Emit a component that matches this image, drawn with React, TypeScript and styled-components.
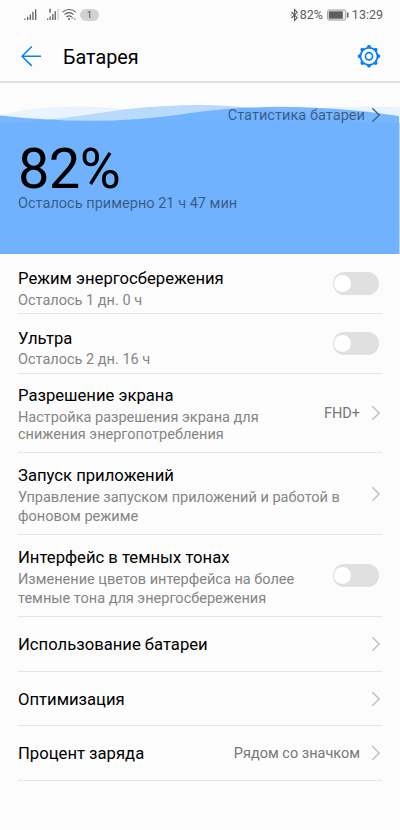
import React from 'react';
import styled, { createGlobalStyle } from 'styled-components';

const GlobalStyle = createGlobalStyle`
  * { box-sizing: border-box; }
  body { margin: 0; background: #fcfcfc; }
`;

const Screen = styled.main`
  display: flex;
  flex-direction: column;
  width: 400px;
  height: 830px;
  overflow: hidden;
  background: #fcfcfc;
  color: #000;
  font-family: Roboto, 'Noto Sans', sans-serif;
  white-space: nowrap;
`;

const StatusBar = styled.div`
  display: flex;
  align-items: center;
  justify-content: space-between;
  height: 30px;
  padding: 0 17px 0 24px;
  color: #5c5c5c;
  font-size: 12.5px;
`;

const StatusGroup = styled.div`
  display: flex;
  align-items: center;
  height: 30px;
`;

const CountPill = styled.span`
  width: 19px;
  height: 12px;
  margin-left: 3px;
  border-radius: 6px;
  background: #d2d2d2;
  color: #4c4c4c;
  font-size: 9.5px;
  line-height: 12.5px;
  text-align: center;
`;

const StatusText = styled.span<{ $gap: number }>`
  display: flex;
  margin-left: ${(p) => p.$gap}px;
  line-height: 16px;
`;

const Header = styled.header`
  display: flex;
  align-items: center;
  height: 53px;
  padding: 1px 19px 0 20px;
  border-bottom: 2px solid #e0e0e0;
`;

const Title = styled.h1`
  flex: 1;
  margin: 3px 0 0 21px;
  font-size: 19.8px;
  font-weight: 400;
  line-height: 26px;
`;

const Hero = styled.section`
  position: relative;
  height: 171px;
`;

const Waves = styled.svg`
  position: absolute;
  inset: 0;
`;

const HeroContent = styled.div`
  position: relative;
  display: flex;
  flex-direction: column;
  padding: 22px 19px 0 18px;
  color: rgba(0, 0, 0, 0.5);
`;

const StatsLink = styled.a`
  display: flex;
  align-items: center;
  justify-content: flex-end;
  height: 20px;
  font-size: 14.6px;
  line-height: 21px;
`;

const Percent = styled.div`
  height: 51px;
  margin-top: 18px;
  color: #000;
  font-size: 56px;
  line-height: 52px;
  letter-spacing: -0.6px;
`;

const Remaining = styled.div`
  font-size: 14.55px;
  line-height: 19px;
`;

const List = styled.div`
  display: flex;
  flex-direction: column;
  padding: 0 18px;
`;

const Row = styled.div<{ $height: number }>`
  display: flex;
  align-items: center;
  height: ${(p) => p.$height}px;
  padding-right: 1px;
  border-bottom: 1px solid #e4e4e4;
`;

const Copy = styled.div<{ $top: number }>`
  flex: 1;
  align-self: flex-start;
  padding-top: ${(p) => p.$top}px;
`;

const RowTitle = styled.div`
  font-size: 16.65px;
  line-height: 20px;
`;

const Description = styled.div<{ $line: number; $gap: number }>`
  margin-top: ${(p) => p.$gap}px;
  color: #858585;
  font-size: 14.52px;
  line-height: ${(p) => p.$line}px;
  white-space: pre-line;
`;

const Value = styled.span`
  padding-top: 2px;
  color: #777;
  font-size: 14.5px;
  line-height: 20px;
`;

const Track = styled.span`
  display: flex;
  align-items: center;
  width: 46px;
  height: 23px;
  margin-right: 2px;
  padding-left: 1px;
  border-radius: 12px;
  background: #e0e0e0;
`;

const Thumb = styled.span`
  width: 17px;
  height: 17px;
  border-radius: 50%;
  background: #fff;
`;

const ChevronSvg = styled.svg<{ $gap: number }>`
  flex: none;
  margin-left: ${(p) => p.$gap}px;
`;

const Chevron = ({ color, strong }: { color: string; strong?: boolean }) => (
  <ChevronSvg
    $gap={strong ? 6 : 11}
    width="10"
    height="16"
    viewBox="0 0 10 16"
    fill="none"
    stroke={color}
    strokeWidth={strong ? 1.5 : 1.3}
  >
    <path d="M1.3 1.2 8.2 8l-6.9 6.8" />
  </ChevronSvg>
);

const LeftStatusIcons = () => (
  <svg width="53" height="14" viewBox="24 8 53 14" fill="#606060">
    <path d="M24.3 18.4h1.2V20h-1.2zM27 16.8h1.3V20H27zM29.7 14.4h1.3V20h-1.3zM32.3 11.8h1.3V20h-1.3zM35 9.2h1.3V20H35z" />
    <path d="M47 18.4h1.3V20H47zM49.5 16.6h1.3V20h-1.3zM52.2 13.9h1.3V20h-1.3zM54.6 11.2h1.3V20h-1.3z" />
    <path d="M57.4 9h1.3v11h-1.3z" fill="#cfcfcf" />
    <path d="M49.3 8.8h1.5v4h-1.5z" />
    <g fill="none" stroke="#606060" strokeWidth="1.2">
      <path d="M62.6 12.1c3.8-3.5 9.2-3.5 13 0" />
      <path d="M64.6 14.6c2.8-2.5 6.2-2.5 9 0M66.6 17c1.6-1.5 3.4-1.5 5 0" />
    </g>
    <circle cx="69" cy="19" r="1" />
    <path d="m72.200 17 1 1.600h-2zM74.800 20l-1-1.600h2z" />
  </svg>
);

const Bluetooth = () => (
  <svg width="9" height="14" viewBox="0 0 9 14" fill="none" stroke="#5c5c5c" strokeWidth="1.1">
    <path d="m1.400 4 5.800 5.700L4.500 12.400V1.600l2.700 2.700L1.400 10" />
    <path d="M.6 7h.9M7.400 7h.9" />
  </svg>
);

const Battery = () => (
  <svg width="22" height="12" viewBox="0 0 22 12">
    <rect x=".6" y="1" width="18.200" height="10" rx="1.500" fill="#eee" stroke="#999" />
    <rect x="1.800" y="2.300" width="14" height="7.400" fill="#5e5e5e" />
    <rect x="20" y="3.500" width="1.500" height="5" fill="#666" />
  </svg>
);

const BackArrow = () => (
  <svg width="22" height="22" viewBox="0 0 22 22" fill="none" stroke="#0a80f5" strokeWidth="1.500">
    <path d="M21 11.300H2M11.800 1.500 2 11.300l9.800 9.600" />
  </svg>
);

const Gear = () => (
  <svg width="24" height="24" viewBox="-12 -12.300 24 24" fill="none" stroke="#0a80f5">
    <circle r="8.500" strokeWidth="1.700" />
    <circle r="3.600" strokeWidth="1.700" />
    <g fill="#0a80f5" stroke="none">
      {[0, 45, 90, 135, 180, 225, 270, 315].map((angle) => (
        <path key={angle} d="M-2.700-8.500-1-11.200h2l1.700 2.700z" transform={`rotate(${angle})`} />
      ))}
    </g>
  </svg>
);

const Switch = () => (
  <Track role="switch" aria-checked="false">
    <Thumb />
  </Track>
);

type Item = {
  title: string;
  height: number;
  top: number;
  text?: string;
  line?: number;
  gap?: number;
  value?: string;
  toggle?: boolean;
};

const items: Item[] = [
  { title: 'Режим энергосбережения', text: 'Осталось 1 дн. 0 ч', height: 60, top: 15, gap: 2, toggle: true },
  { title: 'Ультра', text: 'Осталось 2 дн. 16 ч', height: 60, top: 15, gap: 1, toggle: true },
  { title: 'Разрешение экрана', text: 'Настройка разрешения экрана для\nснижения энергопотребления', height: 79, top: 12, gap: 3, line: 17, value: 'FHD+' },
  { title: 'Запуск приложений', text: 'Управление запуском приложений и работой в\nфоновом режиме', height: 82, top: 13, gap: 2 },
  { title: 'Интерфейс в темных тонах', text: 'Изменение цветов интерфейса на более\nтемные тона для энергосбережения', height: 82, top: 13, gap: 2, toggle: true },
  { title: 'Использование батареи', height: 55, top: 18 },
  { title: 'Оптимизация', height: 54, top: 18 },
  { title: 'Процент заряда', height: 55, top: 18, value: 'Рядом со значком' },
];

export default function App() {
  return (
    <Screen>
      <GlobalStyle />
      <StatusBar>
        <StatusGroup>
          <LeftStatusIcons />
          <CountPill>1</CountPill>
        </StatusGroup>
        <StatusGroup>
          <Bluetooth />
          <StatusText $gap={1}>82%</StatusText>
          <StatusText $gap={4}><Battery /></StatusText>
          <StatusText $gap={3}>13:29</StatusText>
        </StatusGroup>
      </StatusBar>
      <Header>
        <BackArrow />
        <Title>Батарея</Title>
        <Gear />
      </Header>
      <Hero>
        <Waves width="400" height="171" viewBox="0 83 400 171">
          <path d="M0 115C40 105 90 105 125 109C200 120 250 116 300 110C340 106 370 106 400 107V254H0z" fill="#e9f3fd" />
          <path d="M0 123C50 121 85 115 120 110C150 106 185 105 205 105C270 106 320 122 400 123V254H0z" fill="#b9dafc" />
          <path d="M0 115.5C60 122 120 124 190 113C265 103 330 106 399 116V254H0z" fill="rgb(100, 171, 255)" fillOpacity=".85" />
          <path d="M0 123H399V254H0z" fill="#71b2ff" />
        </Waves>
        <HeroContent>
          <StatsLink>
            Статистика батареи
            <Chevron color="#41658d" strong />
          </StatsLink>
          <Percent>82%</Percent>
          <Remaining>Осталось примерно 21 ч 47 мин</Remaining>
        </HeroContent>
      </Hero>
      <List>
        {items.map((item) => (
          <Row key={item.title} $height={item.height}>
            <Copy $top={item.top}>
              <RowTitle>{item.title}</RowTitle>
              {item.text && (
                <Description $line={item.line ?? 19} $gap={item.gap ?? 0}>{item.text}</Description>
              )}
            </Copy>
            {item.value && <Value>{item.value}</Value>}
            {item.toggle ? <Switch /> : <Chevron color="#bcbcbc" />}
          </Row>
        ))}
      </List>
    </Screen>
  );
}
